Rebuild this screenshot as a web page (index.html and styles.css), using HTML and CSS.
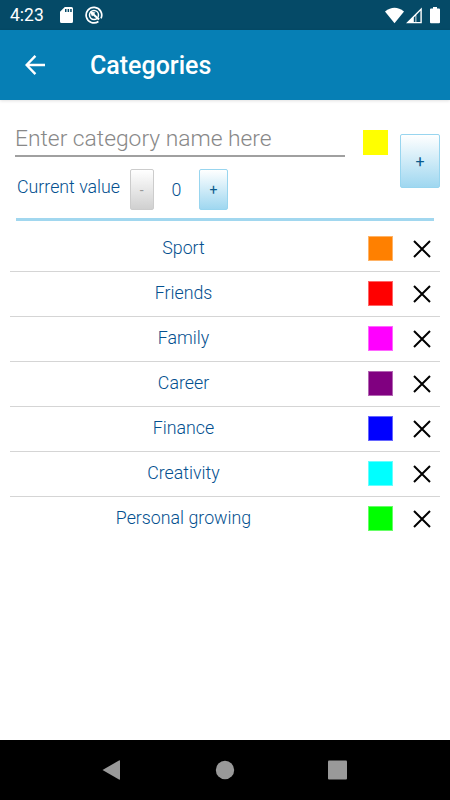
FILE: index.html
```html
<!DOCTYPE html>
<html lang="en">
<head>
<meta charset="utf-8">
<title>Categories</title>
<link rel="stylesheet" href="styles.css">
</head>
<body>
<div class="status">
  <span class="clock">4:23</span>
  <svg class="sd" width="13" height="16" viewBox="0 0 13 16"><path fill="#fff" fill-rule="evenodd" d="M4.8 0H11.5Q13 0 13 1.5V14.500Q13 16 11.500 16H1.500Q0 16 0 14.500V4.800ZM5 2V5H6.500V2ZM7.600 2V5H9.100V2ZM10.200 2V5H11.700V2Z"/></svg>
  <svg class="sync" width="18" height="18" viewBox="0 0 18 18" fill="none" stroke="#fff"><path stroke-width="1.700" d="M16 12.400A7.800 7.800 0 1 0 13.400 15.500"/><circle cx="9" cy="9" r="4.500" stroke-width="1.500"/><path stroke-width="2.200" d="M8 8L14 13.500"/><path fill="#fff" stroke="none" d="M5 5.500L10.500 6.500L7 10.500Z"/></svg>
  <svg class="signals" width="56" height="18" viewBox="0 0 56 18"><path fill="#fff" d="M0 4.500Q9.500-3 19 4.500L9.500 16.300Z"/><path fill="#fff" fill-rule="evenodd" d="M21 16.300L36.800 0.500V16.300ZM28.800 15V10.400L30.500 8.700V15ZM31.300 7.900L35.400 3.800V15H31.300Z"/><path fill="#fff" d="M48 0H52V1.500H54Q55 1.500 55 2.500V15.300Q55 16.300 54 16.300H46Q45 16.300 45 15.300V2.500Q45 1.500 46 1.500H48Z"/></svg>
</div>
<header class="bar">
  <svg width="20" height="20" viewBox="0 0 20 20" fill="none" stroke="#fff" stroke-width="2.400"><path d="M20 10H2M10.400 0.900L1.600 10L10.400 19.100"/></svg>
  <h1>Categories</h1>
</header>
<main>
  <section class="form">
    <div class="field">Enter category name here</div>
    <i class="swatch yellow"></i>
    <button class="btn add">+</button>
    <div class="value">
      <span class="label">Current value</span>
      <button class="btn minus">-</button>
      <span class="num">0</span>
      <button class="btn plus">+</button>
    </div>
  </section>
  <hr>
  <ul>
    <li><span>Sport</span><i class="swatch orange"></i><svg class="x" viewBox="0 0 18 18"><path d="M1 1L17 17M17 1L1 17"/></svg></li>
    <li><span>Friends</span><i class="swatch red"></i><svg class="x" viewBox="0 0 18 18"><path d="M1 1L17 17M17 1L1 17"/></svg></li>
    <li><span>Family</span><i class="swatch magenta"></i><svg class="x" viewBox="0 0 18 18"><path d="M1 1L17 17M17 1L1 17"/></svg></li>
    <li><span>Career</span><i class="swatch purple"></i><svg class="x" viewBox="0 0 18 18"><path d="M1 1L17 17M17 1L1 17"/></svg></li>
    <li><span>Finance</span><i class="swatch blue"></i><svg class="x" viewBox="0 0 18 18"><path d="M1 1L17 17M17 1L1 17"/></svg></li>
    <li><span>Creativity</span><i class="swatch cyan"></i><svg class="x" viewBox="0 0 18 18"><path d="M1 1L17 17M17 1L1 17"/></svg></li>
    <li><span>Personal growing</span><i class="swatch green"></i><svg class="x" viewBox="0 0 18 18"><path d="M1 1L17 17M17 1L1 17"/></svg></li>
  </ul>
</main>
<nav>
  <svg width="450" height="60" viewBox="0 0 450 60" fill="#999"><path d="M102.500 30L119 20.500Q120 20 120 21V39Q120 40 119 39.500Z"/><circle cx="225" cy="30" r="9.200"/><rect x="328" y="20.500" width="19" height="19" rx="1"/></svg>
</nav>
</body>
</html>
```
FILE: styles.css
```css
* {
  box-sizing: border-box;
}

body {
  margin: 0;
  height: 800px;
  display: flex;
  flex-direction: column;
  overflow: hidden;
  background: #fff;
  color: #04508f;
  font-family: Roboto, sans-serif;
  font-size: 17.8px;
  font-weight: 300;
}

.status {
  height: 30px;
  display: flex;
  background: #054a67;
  color: #fff;
}

.clock {
  width: 50px;
  padding-left: 10px;
  font-size: 17.5px;
  font-weight: 400;
  line-height: 31px;
}

.sd {
  margin: 7px 0 0 10px;
}

.sync {
  margin: 6px 0 0 12px;
}

.signals {
  margin: 7px 9px 0 auto;
}

.bar {
  height: 70px;
  display: flex;
  align-items: center;
  padding-left: 25px;
  background: #067fb5;
  box-shadow: 0 1px 3px rgba(0, 0, 0, 0.12);
}

.bar h1 {
  margin: 2px 0 0 45px;
  color: #fff;
  font-size: 25px;
  font-weight: 500;
  line-height: 30px;
}

main {
  flex: 1;
  padding: 24px 10px 0;
}

.form {
  display: grid;
  grid-template-columns: 330px 25px 40px;
  grid-template-rows: 33px 61px;
  margin-left: 5px;
}

.field {
  border-bottom: 2px solid #a0a0a0;
  color: #888;
  font-size: 22.8px;
  line-height: 30px;
  white-space: nowrap;
}

.swatch {
  width: 25px;
  height: 25px;
}

.form .swatch {
  margin: 6px 0 0 17.5px;
}

.btn {
  padding: 0;
  border: 1px solid #98d5ef;
  border-radius: 2px;
  background: linear-gradient(#fff, #9fd7f0);
  color: #0a5a8c;
  font-family: inherit;
  font-size: 14px;
}

.add {
  grid-row: 1 / 3;
  grid-column: 3;
  width: 40px;
  height: 54px;
  margin: 10px 0 0 30px;
  font-size: 16px;
}

.value {
  grid-column: 1;
  grid-row: 2;
  display: flex;
  align-items: flex-start;
  padding: 12px 0 0 2px;
}

.label {
  width: 112.5px;
  line-height: 36px;
}

.minus {
  width: 24.5px;
  height: 41px;
  border-color: #ccc;
  background: linear-gradient(#fff, #d0d0d0);
  color: #999;
}

.num {
  width: 45px;
  text-align: center;
  line-height: 41px;
}

.plus {
  width: 29px;
  height: 41px;
}

hr {
  height: 3px;
  margin: 0 6px 6px;
  border: 0;
  background: #a1d7ef;
}

ul {
  margin: 0;
  padding: 0;
  list-style: none;
}

li {
  height: 45px;
  display: flex;
  align-items: flex-start;
  border-bottom: 1px solid #d5d5d5;
}

li:last-child {
  border-bottom: 0;
}

li span {
  width: 347px;
  margin-right: 10.5px;
  line-height: 41px;
  text-align: center;
}

li .swatch {
  margin: 9px 20px 0 0;
  border: 1px solid rgba(255, 255, 255, 0.4);
}

.x {
  width: 18px;
  height: 18px;
  margin-top: 13px;
  fill: none;
  stroke: #000;
  stroke-width: 2;
}

.yellow { background: #ff0; }
.orange { background: #ff8000; }
.red { background: #f00; }
.magenta { background: #f0f; }
.purple { background: #800080; }
.blue { background: #00f; }
.cyan { background: #0ff; }
.green { background: #0f0; }

nav {
  height: 60px;
  background: #000;
}
```
